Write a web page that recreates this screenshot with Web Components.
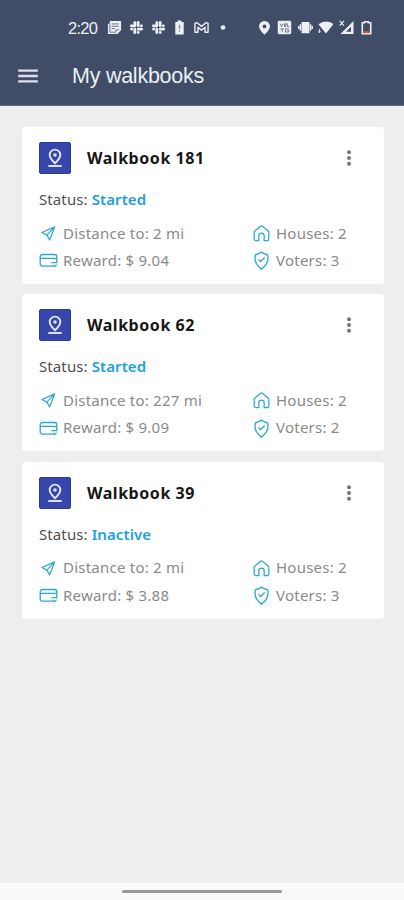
<!DOCTYPE html>
<html lang="en">
<head>
<meta charset="utf-8">
<meta name="viewport" content="width=device-width, initial-scale=1">
<title>My walkbooks</title>
<style>
  html, body {
    height: 100%;
    margin: 0;
  }
  body {
    background: #eee;
    font-family: "Noto Sans", "Open Sans", sans-serif;
    overflow: hidden;
  }
</style>
</head>
<body>
<walkbooks-app>
  <status-bar slot="top" time="2:20"></status-bar>
  <app-header slot="top">My walkbooks</app-header>
  <walkbook-card name="Walkbook 181" status="Started" distance="2 mi" reward="$ 9.04" houses="2" voters="3"></walkbook-card>
  <walkbook-card name="Walkbook 62" status="Started" distance="227 mi" reward="$ 9.09" houses="2" voters="2"></walkbook-card>
  <walkbook-card name="Walkbook 39" status="Inactive" distance="2 mi" reward="$ 3.88" houses="2" voters="3"></walkbook-card>
</walkbooks-app>

<script>
const ICONS = {
  // status bar, 16x16
  news: `<path fill="currentColor" d="M3 1h12v10l-4 4H1V4h2z"/><path stroke="#414c66" d="M5 4.200h7.500M5 6.700h7.500M5 9.200h3.500M3 4.500V13h6.500v-2.500H13" fill="none" stroke-width=".8"/>`,
  slack: `<path stroke="currentColor" stroke-width="3" stroke-linecap="round" fill="none" d="M6.200 2.700v3.500M2.500 6.200h3.700M13.300 6.200h-.2M9.800 2.500v3.700M9.800 9.800h3.700M9.800 13.100v.2M6.200 9.800v3.700M2.700 9.800h.2"/>`,
  charge: `<path fill="currentColor" d="M6 .5h4V2h2.500v13.500h-9V2H6z"/><path fill="#7d8699" d="M7.300 5h1.400v4.500H7.300zM7.300 10.800h1.400v1.400H7.300z"/>`,
  mail: `<path fill="none" stroke="currentColor" stroke-width="1.500" stroke-linejoin="round" d="M1 13V3.500l2-.8L8 6.800l5-4.100 2 .8V13h-3.200V7.800L8 10.800 4.200 7.800V13z"/>`,
  dot: `<circle cx="7.500" cy="8" r="2.500" fill="currentColor"/>`,
  place: `<path fill="currentColor" fill-rule="evenodd" d="M8 1a5.800 5.800 0 0 0-5.800 5.800C2.200 10.500 8 15.500 8 15.500s5.800-5 5.800-8.700A5.800 5.800 0 0 0 8 1zM8 4.800a2 2 0 1 1 0 4 2 2 0 0 1 0-4z"/>`,
  volte: `<rect x=".8" y=".8" width="14.400" height="14.400" rx="1.500" fill="currentColor"/><path fill="none" stroke="#6b758b" d="M3.500 4l1.500 3 1.500-3M8 4h1.500v3H8zM11 3.500v3.500h2M3.500 9.500h4M5.500 9.500V13M9 9.500v3.300h3.500v-2H11M9 9.500h3.500"/>`,
  vibrate: `<path fill="currentColor" d="M3.800 2h8.400v12H3.800zM1.800 4.500h1.500v7H1.800zM12.700 4.500h1.500v7h-1.500zM0 6.500h1.500v3H0zM14.500 6.500H16v3h-1.500z"/>`,
  wifi: `<path fill="currentColor" d="M8.500 14.500L.5 4.500a12.600 12.600 0 0 1 16 0z"/><path fill="none" stroke="currentColor" d="M1.500 9.500v4M0 12l1.500 1.700L3 12"/>`,
  signal: `<path fill="currentColor" fill-rule="evenodd" d="M15.500 1v14H1.500zM12.800 7.200L7.500 12.600h5.300z"/><path stroke="currentColor" stroke-width="1.300" d="M.8 1l4.500 5M5.300 1L.8 6"/>`,
  battery: `<path fill="none" stroke="currentColor" stroke-width="1.700" d="M6 1.800h4V3h2.500v11.700h-9V3H6z"/><path fill="#d8573a" d="M4.500 12h7v2h-7z"/>`,

  // header, 22x22
  menu: `<path stroke="#dddef0" stroke-width="2.400" d="M1.200 5.600h19.600M1.200 11h19.600M1.200 16.400h19.600"/>`,

  // cards, 20x20
  pinbase: `<g fill="none" stroke="#e1e7f6" stroke-width="1.900"><path d="M10 15.300C6.700 12.100 4.700 9.700 4.700 6.900a5.300 5.300 0 0 1 10.600 0c0 2.800-2 5.200-5.300 8.400z"/><path d="M3.300 18h13.400"/></g><circle cx="10" cy="7" r="1.800" fill="#e1e7f6"/>`,
  more: `<g fill="#757575"><circle cx="10" cy="3.600" r="2.200"/><circle cx="10" cy="10" r="2.200"/><circle cx="10" cy="16.400" r="2.200"/></g>`,
  send: `<path d="M3 9L16.500 3l-5.300 13.800-2.900-5.100zM8.300 11.700l8.200-8.700" fill="none" stroke="currentColor" stroke-width="1.300" stroke-linejoin="round"/>`,
  card: `<g fill="none" stroke="currentColor" stroke-width="1.400"><path d="M15 16H3.600A2.300 2.300 0 0 1 1.300 13.700V6a2.300 2.300 0 0 1 2.300-2.300h12.800A2.300 2.300 0 0 1 18.700 6v7M1.300 7.800h17.400"/><path d="M13 12.300h5.500M14.800 14.700l1.700 1.700 2-1.900" stroke-width="1.200"/></g>`,
  house: `<path fill="none" stroke="currentColor" stroke-width="1.300" stroke-linejoin="round" d="M2.300 8.800Q2.300 7.900 3 7.300L9 2.300q1-.8 2 0l6 5q.7.600.7 1.500v7a1.700 1.700 0 0 1-1.700 1.700h-3.200v-5a2.800 2.800 0 0 0-5.600 0v5H4a1.700 1.700 0 0 1-1.700-1.700z"/>`,
  voter: `<g fill="none" stroke="currentColor" stroke-width="1.400" stroke-linejoin="round"><path d="M10 19.200C6.300 16 3.200 12.300 3.200 8.300V5.200Q3.200 4 4.400 3.700 7.500 3 10 1.200q2.500 1.800 5.600 2.500 1.200.3 1.200 1.500v3.100c0 4-3.100 7.700-6.800 10.900z"/><path d="M6.800 8.800l2.300 2.200 4.200-4.200"/></g>`
};

const SIZES = { menu: 22, pinbase: 20, more: 20, send: 20, card: 20, house: 20, voter: 20 };

class UiIcon extends HTMLElement {
  constructor() {
    super();
    this.attachShadow({ mode: 'open' });
  }

  connectedCallback() {
    const name = this.getAttribute('name');
    const box = SIZES[name] || 16;
    this.shadowRoot.innerHTML = `
      <style>
        :host {
          display: block;
          flex: none;
          height: var(--icon-size, 16px);
          width: var(--icon-size, 16px);
        }
        svg {
          display: block;
          height: 100%;
          width: 100%;
        }
      </style>
      <svg viewBox="0 0 ${box} ${box}" aria-hidden="true">${ICONS[name]}</svg>
    `;
  }
}

class StatusBar extends HTMLElement {
  constructor() {
    super();
    this.attachShadow({ mode: 'open' });
  }

  connectedCallback() {
    const icons = names => names.map(n => `<ui-icon name="${n}"></ui-icon>`).join('');
    this.shadowRoot.innerHTML = `
      <style>
        :host {
          align-items: center;
          box-sizing: border-box;
          color: #eceff5;
          display: flex;
          height: 48px;
          justify-content: space-between;
          padding: 7px 30px 0 68px;
        }
        div {
          align-items: center;
          display: flex;
        }
        time {
          font: 16.500px/20px "Liberation Sans", sans-serif;
          letter-spacing: -0.700px;
          width: 39px;
        }
        ui-icon {
          --icon-size: 15px;
        }
        .left ui-icon {
          margin-right: 6.800px;
        }
        .right {
          gap: 5.400px;
        }
      </style>
      <div class="left">
        <time>${this.getAttribute('time')}</time>
        ${icons(['news', 'slack', 'slack', 'charge', 'mail', 'dot'])}
      </div>
      <div class="right">${icons(['place', 'volte', 'vibrate', 'wifi', 'signal', 'battery'])}</div>
    `;
  }
}

class AppHeader extends HTMLElement {
  constructor() {
    super();
    this.attachShadow({ mode: 'open' });
    this.shadowRoot.innerHTML = `
      <style>
        :host {
          align-items: center;
          box-sizing: border-box;
          color: #eaf0f4;
          display: flex;
          gap: 33px;
          height: 57px;
          padding: 0 17px 1px;
        }
        ui-icon {
          --icon-size: 22px;
        }
        h1 {
          font: 400 21.500px/28px "Liberation Sans", sans-serif;
          letter-spacing: -0.250px;
          margin: 0;
        }
      </style>
      <ui-icon name="menu"></ui-icon>
      <h1><slot></slot></h1>
    `;
  }
}

class InfoItem extends HTMLElement {
  constructor() {
    super();
    this.attachShadow({ mode: 'open' });
  }

  connectedCallback() {
    this.shadowRoot.innerHTML = `
      <style>
        :host {
          align-items: center;
          color: #8a8a8a;
          display: flex;
          font-size: 15px;
          gap: 5px;
          letter-spacing: 0.230px;
          line-height: 27.500px;
          white-space: nowrap;
        }
        ui-icon {
          --icon-size: 19px;
          color: #2ba9cb;
        }
      </style>
      <ui-icon name="${this.getAttribute('icon')}"></ui-icon>
      <span><slot></slot></span>
    `;
  }
}

class WalkbookCard extends HTMLElement {
  constructor() {
    super();
    this.attachShadow({ mode: 'open' });
  }

  connectedCallback() {
    const get = name => this.getAttribute(name);
    this.shadowRoot.innerHTML = `
      <style>
        :host {
          background: #fff;
          border-radius: 4px;
          box-sizing: border-box;
          display: block;
          height: 157px;
          padding: 15px 17px 0;
        }
        header {
          align-items: center;
          display: flex;
        }
        .badge {
          --icon-size: 20px;
          background: #3646ab;
          border: 1px solid #2d3a9b;
          border-radius: 2px;
          box-sizing: border-box;
          display: grid;
          height: 32px;
          place-items: center;
          width: 32px;
        }
        h2 {
          color: #161616;
          flex: 1;
          font-size: 16px;
          font-weight: 700;
          letter-spacing: 0.550px;
          line-height: 32px;
          margin: 0 0 0 16px;
        }
        .more {
          --icon-size: 18px;
          margin-right: 9px;
        }
        .status {
          color: #505050;
          font-size: 15px;
          letter-spacing: 0.100px;
          line-height: 20px;
          margin: 15px 0 10.500px;
        }
        .status b {
          color: #1da1dc;
          font-weight: 600;
        }
        .info {
          display: grid;
          grid-template-columns: 213px 1fr;
        }
      </style>
      <header>
        <div class="badge"><ui-icon name="pinbase"></ui-icon></div>
        <h2>${get('name')}</h2>
        <ui-icon class="more" name="more"></ui-icon>
      </header>
      <div class="status">Status: <b>${get('status')}</b></div>
      <div class="info">
        <info-item icon="send">Distance to: ${get('distance')}</info-item>
        <info-item icon="house">Houses: ${get('houses')}</info-item>
        <info-item icon="card">Reward: ${get('reward')}</info-item>
        <info-item icon="voter">Voters: ${get('voters')}</info-item>
      </div>
    `;
  }
}

class WalkbooksApp extends HTMLElement {
  constructor() {
    super();
    this.attachShadow({ mode: 'open' });
    this.shadowRoot.innerHTML = `
      <style>
        :host {
          display: flex;
          flex-direction: column;
          height: 100vh;
        }
        .top {
          background: #414c66;
          border-bottom: 1px solid #606a7f;
          box-sizing: border-box;
          height: 106px;
        }
        main {
          display: flex;
          flex: 1;
          flex-direction: column;
          gap: 10.400px;
          padding: 21px 20px 0 22px;
        }
        footer {
          background: #fafafa;
          display: grid;
          height: 17px;
          place-items: center;
        }
        footer span {
          background: #999;
          border-radius: 2px;
          height: 3px;
          width: 160px;
        }
      </style>
      <div class="top"><slot name="top"></slot></div>
      <main><slot></slot></main>
      <footer><span></span></footer>
    `;
  }
}

customElements.define('ui-icon', UiIcon);
customElements.define('status-bar', StatusBar);
customElements.define('app-header', AppHeader);
customElements.define('info-item', InfoItem);
customElements.define('walkbook-card', WalkbookCard);
customElements.define('walkbooks-app', WalkbooksApp);
</script>
</body>
</html>
